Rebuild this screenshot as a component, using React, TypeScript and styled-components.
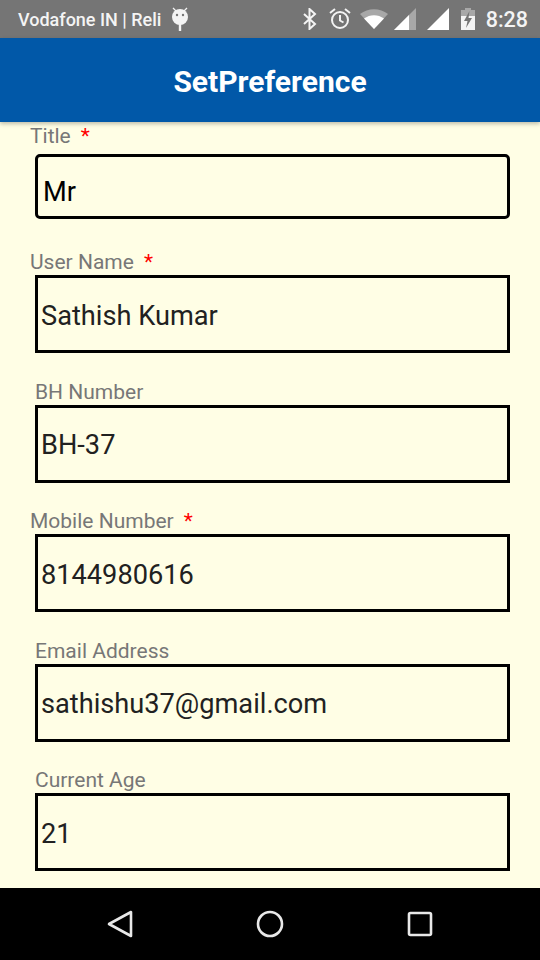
import React from "react";
import styled, { createGlobalStyle } from "styled-components";

const GlobalStyle = createGlobalStyle`
  html, body {
    margin: 0;
    padding: 0;
    background: #000;
  }
  * {
    box-sizing: border-box;
  }
`;

const fields = [
  { label: "User Name", value: "Sathish Kumar", required: true },
  { label: "BH Number", value: "BH-37", required: false },
  { label: "Mobile Number", value: "8144980616", required: true },
  { label: "Email Address", value: "sathishu37@gmail.com", required: false },
  { label: "Current Age", value: "21", required: false },
];

export default function App() {
  return (
    <Screen>
      <GlobalStyle />
      <StatusBar>
        <Carrier>
          <span>Vodafone IN | Reli</span>
          <svg width="18" height="24" viewBox="0 0 18 24">
            <path d="M2 1l3.500 3.500M16 1l-3.500 3.500" stroke="#f4f4f4" strokeWidth="1.3" />
            <ellipse cx="9" cy="10" rx="8" ry="8" fill="#f4f4f4" />
            <circle cx="6" cy="8" r="1.2" fill="#757575" />
            <circle cx="12" cy="8" r="1.2" fill="#757575" />
            <rect x="7.800" y="17" width="2.400" height="7" fill="#f4f4f4" />
          </svg>
        </Carrier>
        <StatusIcons>
          <svg width="16" height="22" viewBox="0 0 16 22">
            <path d="M2 6l11 10-5.500 5V1L13 6 2 16" fill="none" stroke="#f4f4f4" strokeWidth="2" />
          </svg>
          <svg width="24" height="24" viewBox="0 0 24 24" style={{ marginLeft: 10 }}>
            <circle cx="12" cy="13" r="8" fill="none" stroke="#f4f4f4" strokeWidth="2" />
            <path d="M12 8v5.500l3.500 2M2 6l5-4M22 6l-5-4" fill="none" stroke="#f4f4f4" strokeWidth="2" />
          </svg>
          <svg width="28" height="20" viewBox="0 0 28 20" style={{ marginLeft: 8 }}>
            <path d="M0 5C8-1.500 20-1.500 28 5L14 20Z" fill="#a8a8a8" />
            <path d="M4 9.500C10 5 18 5 24 9.500L14 20Z" fill="#fff" />
          </svg>
          <svg width="22" height="22" viewBox="0 0 22 22" style={{ marginLeft: 6 }}>
            <path d="M0 22L22 0V22Z" fill="#a8a8a8" />
            <path d="M0 22L15 7V22Z" fill="#fff" />
          </svg>
          <svg width="22" height="22" viewBox="0 0 22 22" style={{ marginLeft: 11 }}>
            <path d="M0 22L22 0V22Z" fill="#fff" />
          </svg>
          <svg width="14" height="22" viewBox="0 0 14 22" style={{ marginLeft: 12 }}>
            <path d="M4 0h6v2h4v20H0V2h4Z" fill="#a8a8a8" />
            <path d="M0 8h14v14H0Z" fill="#f4f4f4" />
            <path d="M8.500 3L3 13h3.500L5 20l6-10H7.500Z" fill="#757575" />
          </svg>
          <Clock>8:28</Clock>
        </StatusIcons>
      </StatusBar>
      <AppBar>SetPreference</AppBar>
      <Content>
        <TitleLabel $required>
          Title<Star>*</Star>
        </TitleLabel>
        <SelectBox>Mr</SelectBox>
        {fields.map((field) => (
          <Field key={field.label}>
            <FieldLabel $required={field.required}>
              {field.label}
              {field.required && <Star>*</Star>}
            </FieldLabel>
            <InputBox>{field.value}</InputBox>
          </Field>
        ))}
      </Content>
      <NavBar>
        <svg width="26" height="28" viewBox="0 0 26 28">
          <path d="M2 14L24 2V26Z" fill="none" stroke="#e8e8e8" strokeWidth="2.600" strokeLinejoin="round" />
        </svg>
        <svg width="28" height="28" viewBox="0 0 28 28">
          <circle cx="14" cy="14" r="12" fill="none" stroke="#e8e8e8" strokeWidth="2.600" />
        </svg>
        <svg width="26" height="26" viewBox="0 0 26 26">
          <rect x="2" y="2" width="22" height="22" rx="1.500" fill="none" stroke="#e8e8e8" strokeWidth="2.600" />
        </svg>
      </NavBar>
    </Screen>
  );
}

const Screen = styled.div`
  display: flex;
  flex-direction: column;
  width: 540px;
  height: 960px;
  overflow: hidden;
  font-family: "Roboto", sans-serif;
`;

const StatusBar = styled.div`
  display: flex;
  align-items: center;
  justify-content: space-between;
  height: 38px;
  padding: 0 12px 0 18px;
  background: #757575;
  color: #f4f4f4;
`;

const Carrier = styled.div`
  display: flex;
  align-items: center;
  gap: 10px;
  font-size: 18px;
  font-weight: 500;
`;

const StatusIcons = styled.div`
  display: flex;
  align-items: center;
`;

const Clock = styled.span`
  margin-left: 11px;
  font-size: 21.5px;
  font-weight: 500;
`;

const AppBar = styled.div`
  position: relative;
  z-index: 1;
  display: flex;
  align-items: center;
  justify-content: center;
  height: 84px;
  padding-top: 3px;
  background: #0158a8;
  box-shadow: 0 2px 4px rgba(0, 0, 0, 0.25);
  color: #fff;
  font-size: 30px;
  font-weight: 700;
`;

const Content = styled.div`
  flex: 1;
  min-height: 0;
  overflow: hidden;
  padding-top: 4px;
  background: #fffee5;
`;

const Field = styled.div`
  margin-top: 23.5px;
`;

const FieldLabel = styled.div<{ $required?: boolean }>`
  height: 28px;
  padding-left: ${(p) => (p.$required ? "30px" : "35px")};
  color: #777;
  font-size: 21px;
  line-height: 30px;
`;

const TitleLabel = styled(FieldLabel)`
  line-height: 20px;
`;

const Star = styled.span`
  margin-left: 10px;
  color: #f00;
`;

const SelectBox = styled.div`
  display: flex;
  align-items: center;
  width: 475px;
  height: 65px;
  margin: 0 0 28px 35px;
  padding: 10px 0 0 5px;
  border: 3px solid #000;
  border-radius: 5px;
  color: #000;
  font-size: 27.2px;
`;

const InputBox = styled.div`
  display: flex;
  align-items: center;
  width: 475px;
  height: 78px;
  margin-left: 35px;
  padding: 3px 0 0 3px;
  border: 3px solid #000;
  color: #212121;
  font-size: 27.2px;
`;

const NavBar = styled.div`
  display: flex;
  align-items: center;
  justify-content: space-around;
  height: 72px;
  padding: 0 45px;
  background: #000;
`;
